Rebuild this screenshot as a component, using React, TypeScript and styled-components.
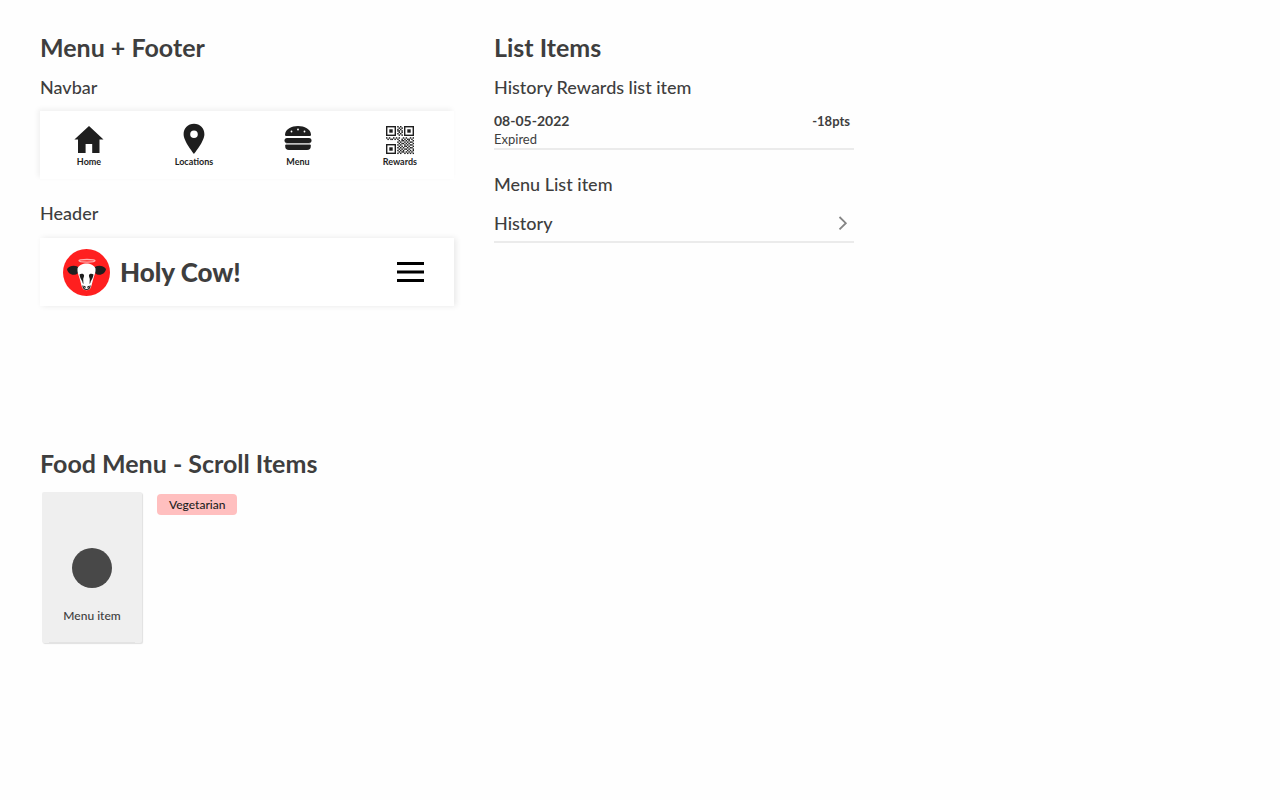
import React from "react";
import styled, { createGlobalStyle } from "styled-components";

const GlobalStyle = createGlobalStyle`
  *, *::before, *::after { box-sizing: border-box; }
  body {
    margin: 0;
    background: #fefefe;
    color: #3e3e3e;
    font-family: Lato, "Liberation Sans", sans-serif;
  }
`;

const Page = styled.main`
  display: flex;
  flex-direction: column;
  gap: 140px;
  padding: 30px 40px;
`;

const Columns = styled.div`
  display: grid;
  grid-template-columns: minmax(0, 414px) minmax(0, 360px);
  gap: 40px;
`;

const Section = styled.section`
  display: flex;
  flex-direction: column;
`;

const Title = styled.h1`
  margin: 0;
  font-size: 25px;
  font-weight: 700;
  line-height: 34px;
`;

const Subtitle = styled.h2<{ $spaced?: boolean }>`
  margin: ${(p) => (p.$spaced ? "21px" : "10px")} 0 0;
  font-size: 18px;
  font-weight: 500;
  line-height: 26px;
`;

const Navbar = styled.nav`
  display: flex;
  justify-content: space-between;
  margin-top: 11px;
  height: 68px;
  padding: 11px 37px 0 34px;
  background: #fff;
  box-shadow: -2px -2px 5px rgba(0, 0, 0, 0.06);
`;

const NavLink = styled.a`
  display: flex;
  flex-direction: column;
  align-items: center;
  color: #1e1e1e;
  font-size: 9px;
  font-weight: 700;
  line-height: 12px;
  text-decoration: none;

  svg { display: block; }
`;

const HeaderBar = styled.header`
  display: flex;
  align-items: center;
  margin-top: 12px;
  height: 68px;
  padding: 0 30px 0 23px;
  background: #fff;
  box-shadow: 2px 0 6px rgba(0, 0, 0, 0.09);
`;

const Brand = styled.span`
  margin-left: 10px;
  font-size: 26px;
  font-weight: 900;
  line-height: 34px;
`;

const MenuButton = styled.button`
  display: block;
  margin-left: auto;
  padding: 0;
  border: 0;
  background: none;
  cursor: pointer;

  svg { display: block; }
`;

const ListRow = styled.div`
  display: flex;
  justify-content: space-between;
  margin-top: 12px;
  padding-right: 4px;
  border-bottom: 2px solid #ebebeb;
  font-size: 13px;
  line-height: 18px;
`;

const EntryDate = styled.strong`
  display: block;
  font-size: 14px;
  font-weight: 700;
`;

const Points = styled.strong`
  font-weight: 700;
`;

const MenuRow = styled.a`
  display: flex;
  align-items: center;
  justify-content: space-between;
  margin-top: 10px;
  padding: 2px 6px 4px 0;
  border-bottom: 2px solid #ebebeb;
  color: inherit;
  font-size: 18px;
  font-weight: 500;
  line-height: 28px;
  text-decoration: none;
`;

const ScrollItems = styled.div`
  display: flex;
  align-items: flex-start;
  gap: 15px;
  margin-top: 12px;
  padding-left: 2px;
`;

const FoodCard = styled.button`
  display: flex;
  flex-direction: column;
  align-items: center;
  justify-content: flex-end;
  gap: 20px;
  width: 100px;
  height: 151px;
  padding: 0 0 19px;
  border: 0;
  border-radius: 2px;
  background: linear-gradient(#e3e3e3, #e3e3e3) center bottom / calc(100% - 14px) 1px no-repeat #efefef;
  box-shadow: 1px 1px 1px rgba(0, 0, 0, 0.12);
  color: #3e3e3e;
  font-family: inherit;
  font-size: 12px;
  font-weight: 500;
  line-height: 16px;
`;

const Dot = styled.span`
  width: 40px;
  height: 40px;
  border-radius: 50%;
  background: #484848;
`;

const Tag = styled.span`
  margin-top: 2px;
  padding: 0 12px;
  border-radius: 4px;
  background: #ffbfbf;
  color: #1e1e1e;
  font-size: 12px;
  font-weight: 500;
  line-height: 21px;
`;

const HomeIcon = () => (
  <svg width="30" height="34" viewBox="0 0 30 34" fill="#1e1e1e" aria-hidden="true">
    <path d="M15 4 0.4 17.4H4V31h7.6v-9h6.6v9H25.500V17.400h4Z" />
  </svg>
);

const PinIcon = () => (
  <svg width="22" height="34" viewBox="0 0 22 34" fill="#1e1e1e" aria-hidden="true">
    <path fillRule="evenodd" d="M11 1.8C5 1.8.6 6.300.6 12.300.6 19.500 11 32 11 32s10.400-12.500 10.400-19.700C21.400 6.300 17 1.800 11 1.800Zm0 6.700a3.800 3.800 0 1 1 0 7.600 3.800 3.800 0 0 1 0-7.600Z" />
  </svg>
);

const BurgerIcon = () => (
  <svg width="28" height="34" viewBox="0 0 28 34" fill="#1e1e1e" aria-hidden="true">
    <path d="M1 12.500C1.500 7 7.500 4 14 4s12.500 3 13 8.500c0 1-.6 1.500-1.500 1.500h-23C1.600 14 1 13.500 1 12.500Z" />
    <rect x="0.500" y="16" width="27" height="5" rx="2.500" />
    <rect x="2" y="21" width="24" height="2" fill="#bdbdbd" />
    <path d="M1.200 22.800h25.600v1.500a3.800 3.800 0 0 1-3.800 3.800H5a3.800 3.800 0 0 1-3.800-3.800Z" />
    <g fill="#fff">
      <circle cx="7.500" cy="9.500" r="0.900" />
      <circle cx="14" cy="7.500" r="0.900" />
      <circle cx="20.500" cy="9.500" r="0.900" />
    </g>
  </svg>
);

// Data modules of the code; the three corner squares are drawn separately.
const qrRows = [
  "........#.#.........",
  ".........#.#........",
  "........#.#.........",
  "........##.#........",
  ".........#.#........",
  "........#.#.........",
  ".........#.#........",
  "....................",
  "#.#..#.#.#..#.#..#.#",
  ".#.##.#.#..#.#.##.#.",
  ".........#.##.#.#..#",
  "........#.#..#.#.##.",
  ".........#.##.#.#..#",
  "........#.#..#.#.##.",
  ".........#.#.##.#..#",
  "........#.#.#..#.##.",
  ".........#.#.##.#..#",
  "........#.#.#..#.#.#",
  ".........#.##.#.#.#.",
  "........#.#..#.#.#.#",
];

const corners = [
  [0, 0],
  [18, 0],
  [0, 18],
];

const QrIcon = () => (
  <svg width="28" height="34" viewBox="0 0 28 34" fill="#1e1e1e" aria-hidden="true">
    {corners.map(([x, y]) => (
      <g key={`${x}-${y}`} transform={`translate(${x} ${y + 4})`}>
        <rect x="0.700" y="0.700" width="8.600" height="8.600" fill="none" stroke="#1e1e1e" strokeWidth="1.400" />
        <rect x="3.300" y="3.300" width="3.400" height="3.400" />
      </g>
    ))}
    <g transform="translate(0 4) scale(1.400)">
      {qrRows.flatMap((row, y) =>
        [...row].map((cell, x) =>
          cell === "#" ? <rect key={`${x}-${y}`} x={x} y={y} width="1.050" height="1.050" /> : null
        )
      )}
    </g>
  </svg>
);

const CowLogo = () => (
  <svg width="47" height="47" viewBox="0 0 47 47" aria-hidden="true">
    <circle cx="23.500" cy="23.500" r="23.500" fill="#ff1f1f" />
    <ellipse cx="24" cy="11.800" rx="8" ry="1.300" fill="none" stroke="#ffb3b3" strokeWidth="1.300" />
    <path d="M16 19C13.500 16 7 16 4 20c.5 3.500 3.500 6 7 5.800 3-.1 4.500-1.800 5.500-4Z" fill="#1e1e1e" />
    <path d="M31 19c2.500-3 9-3 12 1-.5 3.500-3.500 6-7 5.800-3-.1-4.500-1.800-5.500-4Z" fill="#1e1e1e" />
    <path d="M14.500 19.500c1.500-3.500 5-5 9-5s7.500 1.500 9 5c.3 3.500-.8 6-1.800 9-1 3-1.600 6.500-2.700 9.500-.8 2.300-2.500 3.200-4.500 3.200s-3.700-.9-4.500-3.200c-1.100-3-1.700-6.500-2.700-9.500-1-3-2.100-5.500-1.800-9Z" fill="#fff" />
    <path d="M16.500 25.500c1.500-1.200 3.800-1 4.500.5.300 1.600-.5 2.600-.8 4l.3 5c-.8-.6-1-1.500-1.200-2.600-1.400-2-2.400-4.200-2.800-6.900Z" fill="#1e1e1e" />
    <path d="M30.500 25.500c-1.500-1.200-3.800-1-4.500.5-.3 1.600.5 2.600.8 4l-.3 5c.8-.6 1-1.500 1.200-2.600 1.400-2 2.400-4.200 2.800-6.900Z" fill="#1e1e1e" />
    <path d="M19.800 36.500c.4 2.900 1.700 4 3.700 4s3.300-1.100 3.700-4" fill="none" stroke="#1e1e1e" strokeWidth="1.200" />
    <path d="M21 37.200l1.600 1.400M26 37.200l-1.600 1.400" stroke="#1e1e1e" strokeWidth="1.300" />
  </svg>
);

const navItems = [
  { label: "Home", Icon: HomeIcon },
  { label: "Locations", Icon: PinIcon },
  { label: "Menu", Icon: BurgerIcon },
  { label: "Rewards", Icon: QrIcon },
];

export default function App() {
  return (
    <>
      <GlobalStyle />
      <Page>
        <Columns>
          <Section>
            <Title>Menu + Footer</Title>
            <Subtitle>Navbar</Subtitle>
            <Navbar aria-label="Main">
              {navItems.map(({ label, Icon }) => (
                <NavLink key={label} href="#">
                  <Icon />
                  {label}
                </NavLink>
              ))}
            </Navbar>
            <Subtitle $spaced>Header</Subtitle>
            <HeaderBar>
              <CowLogo />
              <Brand>Holy Cow!</Brand>
              <MenuButton type="button" aria-label="Open menu">
                <svg width="27" height="20" viewBox="0 0 27 20" aria-hidden="true">
                  <path d="M0 1.500h27M0 10h27M0 18.500h27" stroke="#000" strokeWidth="3" />
                </svg>
              </MenuButton>
            </HeaderBar>
          </Section>
          <Section>
            <Title>List Items</Title>
            <Subtitle>History Rewards list item</Subtitle>
            <ListRow>
              <div>
                <EntryDate>08-05-2022</EntryDate>
                Expired
              </div>
              <Points>-18pts</Points>
            </ListRow>
            <Subtitle $spaced>Menu List item</Subtitle>
            <MenuRow href="#">
              History
              <svg width="10" height="14" viewBox="0 0 10 14" fill="none" aria-hidden="true">
                <path d="M1.500 1 7.800 7.200 1.500 13.400" stroke="#858585" strokeWidth="1.800" />
              </svg>
            </MenuRow>
          </Section>
        </Columns>
        <Section>
          <Title>Food Menu - Scroll Items</Title>
          <ScrollItems>
            <FoodCard type="button">
              <Dot />
              Menu item
            </FoodCard>
            <Tag>Vegetarian</Tag>
          </ScrollItems>
        </Section>
      </Page>
    </>
  );
}
